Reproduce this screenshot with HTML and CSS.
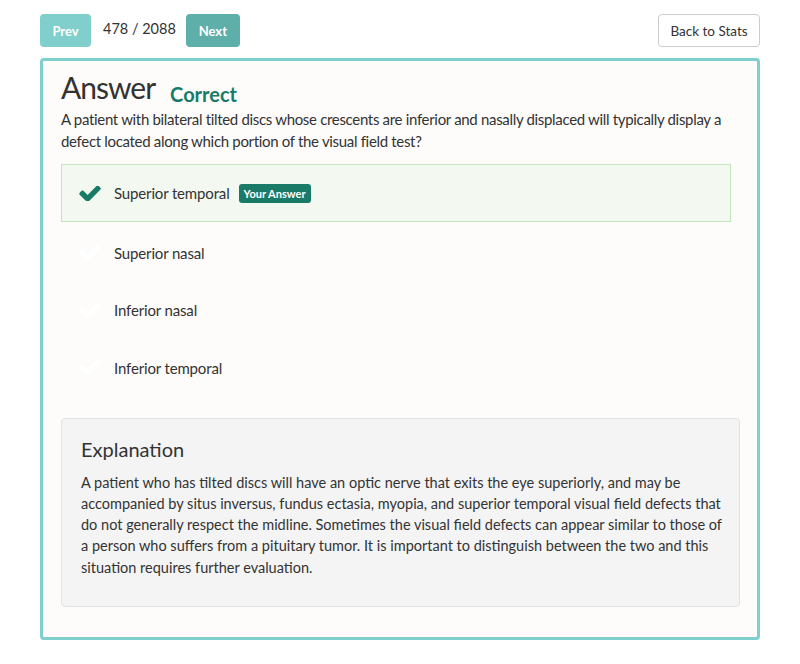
FILE: index.html
```html
<!DOCTYPE html>
<html lang="en">
<head>
<meta charset="utf-8">
<title>Answer</title>
<link rel="stylesheet" href="styles.css">
</head>
<body>
<div class="topbar">
  <div class="pager">
    <button class="btn btn-prev">Prev</button>
    <span class="count">478 / 2088</span>
    <button class="btn btn-next">Next</button>
  </div>
  <button class="btn btn-back">Back to Stats</button>
</div>
<div class="card">
  <div class="title-row">
    <h1 class="title">Answer</h1>
    <span class="status">Correct</span>
  </div>
  <p class="question">A patient with bilateral tilted discs whose crescents are inferior and nasally displaced will typically display a defect located along which portion of the visual field test?</p>
  <ul class="options">
    <li class="option selected">
      <svg class="check" viewBox="100 400 1580 1030"><path d="M1671 566q0 40-28 68l-724 724-136 136q-28 28-68 28t-68-28l-136-136-362-362q-28-28-28-68t28-68l136-136q28-28 68-28t68 28l294 295 656-657q28-28 68-28t68 28l136 136q28 28 28 68z"/></svg>
      <span class="opt-text">Superior temporal</span>
      <span class="badge">Your Answer</span>
    </li>
    <li class="option">
      <svg class="check faint" viewBox="100 400 1580 1030"><path d="M1671 566q0 40-28 68l-724 724-136 136q-28 28-68 28t-68-28l-136-136-362-362q-28-28-28-68t28-68l136-136q28-28 68-28t68 28l294 295 656-657q28-28 68-28t68 28l136 136q28 28 28 68z"/></svg>
      <span class="opt-text">Superior nasal</span>
    </li>
    <li class="option">
      <svg class="check faint" viewBox="100 400 1580 1030"><path d="M1671 566q0 40-28 68l-724 724-136 136q-28 28-68 28t-68-28l-136-136-362-362q-28-28-28-68t28-68l136-136q28-28 68-28t68 28l294 295 656-657q28-28 68-28t68 28l136 136q28 28 28 68z"/></svg>
      <span class="opt-text">Inferior nasal</span>
    </li>
    <li class="option">
      <svg class="check faint" viewBox="100 400 1580 1030"><path d="M1671 566q0 40-28 68l-724 724-136 136q-28 28-68 28t-68-28l-136-136-362-362q-28-28-28-68t28-68l136-136q28-28 68-28t68 28l294 295 656-657q28-28 68-28t68 28l136 136q28 28 28 68z"/></svg>
      <span class="opt-text">Inferior temporal</span>
    </li>
  </ul>
  <div class="explanation">
    <h2 class="exp-title">Explanation</h2>
    <p class="exp-text">A patient who has tilted discs will have an optic nerve that exits the eye superiorly, and may be accompanied by situs inversus, fundus ectasia, myopia, and superior temporal visual field defects that do not generally respect the midline. Sometimes the visual field defects can appear similar to those of a person who suffers from a pituitary tumor. It is important to distinguish between the two and this situation requires further evaluation.</p>
  </div>
</div>
</body>
</html>
```

FILE: styles.css
```css
* { box-sizing: border-box; }
body {
  margin: 0;
  background: #ffffff;
  font-family: Lato, "Open Sans", sans-serif;
  color: #333333;
}
.topbar {
  display: flex;
  justify-content: space-between;
  align-items: center;
  width: 720px;
  margin: 14px 0 0 40px;
}
.pager {
  display: flex;
  align-items: center;
}
.btn {
  height: 33px;
  border-radius: 4px;
  font-family: Lato, sans-serif;
  font-size: 13px;
  cursor: pointer;
}
.btn-prev, .btn-next {
  border: 1px solid transparent;
  color: #ffffff;
  font-weight: 700;
  padding: 0;
}
.btn-prev { background: #80cfcc; width: 51px; }
.btn-next { background: #5eaeaa; width: 54px; }
.count {
  font-size: 14.5px;
  margin: 0 10px 0 12px;
  color: #333;
  position: relative;
  top: -2px;
}
.btn-back {
  background: #ffffff;
  border: 1px solid #cccccc;
  color: #333333;
  width: 102px;
  padding: 0;
  font-size: 13.5px;
}
.card {
  width: 720px;
  height: 582px;
  margin: 11px 0 0 40px;
  border: 3px solid #7fcfcd;
  border-radius: 4px;
  background: #fdfcfa;
  padding: 0 17px 30px 18px;
}
.title-row {
  display: flex;
  align-items: baseline;
  margin-top: 8px;
  height: 39px;
}
.title {
  margin: 0;
  font-size: 30px;
  font-weight: 400;
  letter-spacing: -1px;
  color: #333;
}
.status {
  margin-left: 15px;
  font-size: 20px;
  font-weight: 700;
  color: #1a7a68;
  position: relative;
  top: 3px;
}
.question {
  margin: 0;
  font-size: 15px;
  letter-spacing: -0.32px;
  line-height: 22px;
  color: #333;
}
.options {
  list-style: none;
  margin: 12px 9px 0 0;
  padding: 0;
}
.option {
  display: flex;
  align-items: center;
  height: 57.5px;
  padding-left: 17px;
  font-size: 15px;
  letter-spacing: -0.15px;
  border: 1px solid transparent;
}
.option.selected {
  background: #f3f9f1;
  border-color: #c4e5bb;
  height: 58px;
  margin-bottom: 2px;
}
.check {
  width: 22px;
  height: 15px;
  fill: #1a7a68;
  margin-right: 13px;
}
.check.faint { fill: #ffffff; }
.opt-text { color: #333; }
.badge {
  margin-left: 9px;
  background: #1a7a68;
  color: #fff;
  font-size: 11px;
  font-weight: 700;
  letter-spacing: 0;
  padding: 3px 5px;
  border-radius: 3px;
  line-height: 13px;
}
.explanation {
  margin-top: 21px;
  background: #f4f4f4;
  border: 1px solid #e1e1e1;
  border-radius: 4px;
  padding: 16px 7px 24px 19px;
  height: 189px;
}
.exp-title {
  margin: 0 0 9px;
  font-size: 20px;
  font-weight: 400;
  color: #333;
  line-height: 28px;
}
.exp-text {
  margin: 0;
  font-size: 14.5px;
  line-height: 21.3px;
  color: #333;
}
```
